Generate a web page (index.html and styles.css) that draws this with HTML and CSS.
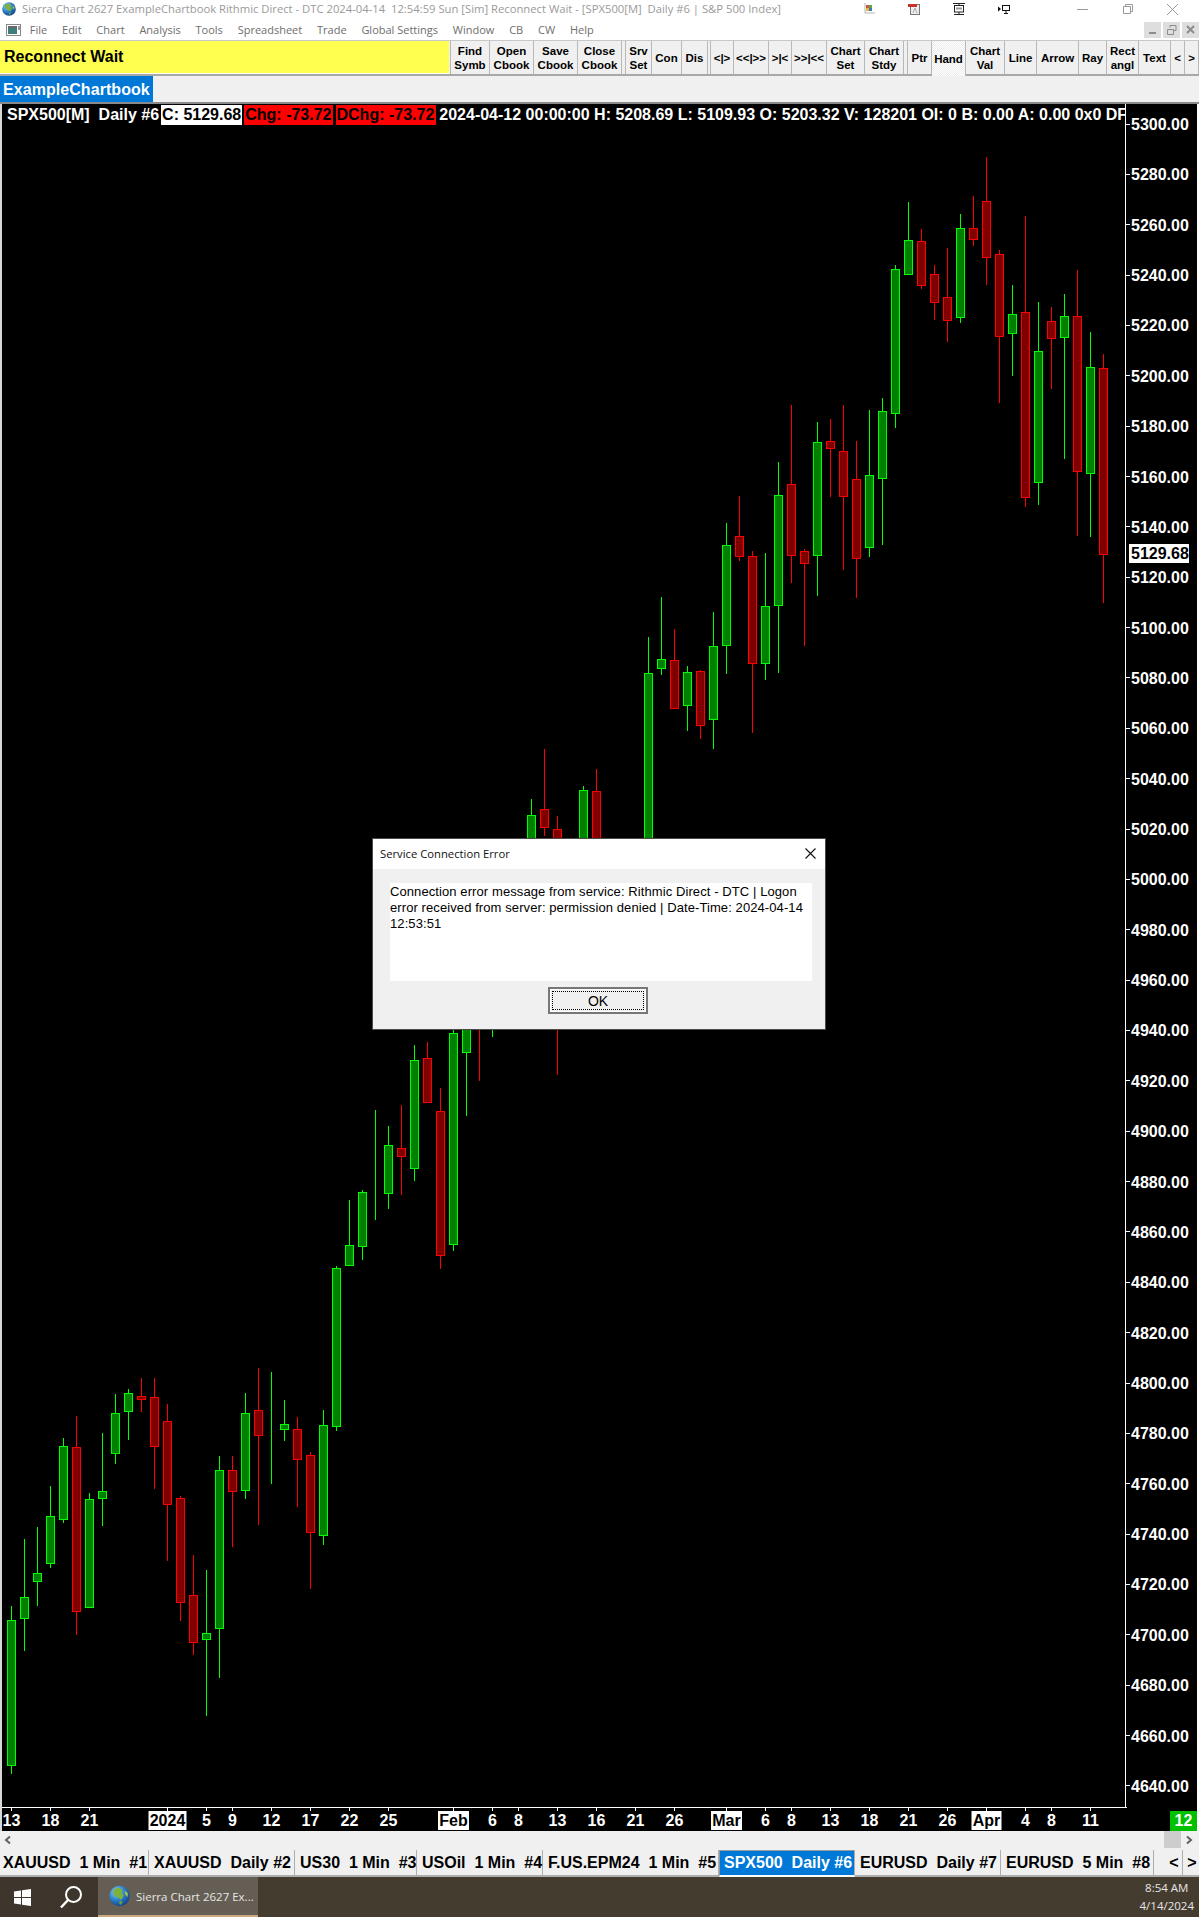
FILE: index.html
```html
<!DOCTYPE html>
<html lang="en">
<head>
    <meta charset="UTF-8">
    <title>Sierra Chart 2627 ExampleChartbook</title>
    <link rel="stylesheet" href="styles.css">
</head>
<body>

<svg class="defs" width="0" height="0">
    <defs>
        <radialGradient id="sea" cx="35%" cy="30%" r="75%">
            <stop offset="0" stop-color="#8fd0f5"/>
            <stop offset="0.55" stop-color="#2a7fc8"/>
            <stop offset="1" stop-color="#123f86"/>
        </radialGradient>
        <symbol id="globe" viewBox="0 0 14 14">
            <circle cx="7" cy="7" r="6.8" fill="url(#sea)"/>
            <path d="M3 2.6 6.4 1.4 9 2.8 8.4 5.2 9.8 6.8 8 9.6 6.4 8 4.6 7.6 3 5.6Z" fill="#7fb23a"/>
            <path d="M10.4 3.4 12.6 5.2 12.4 7.6 10.8 6.2Z" fill="#9cc24a"/>
            <path d="M7 10.4 9 10.6 8.2 12.8 6.8 12.4Z" fill="#6ba437"/>
        </symbol>
    </defs>
</svg>

<div class="titlebar">
    <svg class="app-icon" width="14" height="14"><use href="#globe"/></svg>
    <span class="title-text">Sierra Chart 2627 ExampleChartbook Rithmic Direct - DTC 2024-04-14  12:54:59 Sun [Sim] Reconnect Wait - [SPX500[M]  Daily #6 | S&amp;P 500 Index]</span>
    <div class="tray">
        <svg width="12" height="12" viewBox="0 0 12 12">
            <path d="M2 0v10h10" fill="none" stroke="#b5b5b5"/>
            <rect x="3" y="2" width="3" height="3" fill="#d9503f"/>
            <rect x="6" y="2" width="3" height="3" fill="#5aa845"/>
            <rect x="3" y="5" width="3" height="3" fill="#e8b92f"/>
            <rect x="6" y="5" width="3" height="3" fill="#3d78c9"/>
        </svg>
        <svg width="12" height="12" viewBox="0 0 12 12">
            <rect x="2.5" y="1.5" width="9" height="10" fill="#eee" stroke="#777"/>
            <rect x="0" y="1" width="9" height="3" fill="#c8322b"/>
            <path d="M5 10 7 5 9 10" fill="none" stroke="#aaa"/>
        </svg>
        <svg width="12" height="12" viewBox="0 0 12 12">
            <path d="M0 .5h12M1 11.5h10M6 0v2M6 9v3" stroke="#222"/>
            <rect x="1.5" y="2.5" width="9" height="6.5" fill="#fff" stroke="#222"/>
            <rect x="3" y="4.5" width="6" height="2" fill="#999"/>
        </svg>
        <svg width="12" height="12" viewBox="0 0 12 12">
            <path d="M0 3.5 3 6 0 8.500Z" fill="#111"/>
            <rect x="4.500" y="2.500" width="7" height="5" fill="#fff" stroke="#111"/>
            <path d="M8 8v2M6 10.500h4" stroke="#111"/>
        </svg>
    </div>
    <div class="window-controls">
        <svg width="45" height="19" viewBox="0 0 45 19"><path d="M17 9.500h11" stroke="#999"/></svg>
        <svg width="45" height="19" viewBox="0 0 45 19"><path d="M18.500 6.500h7v7h-7zM20.500 6.500v-2h7v7h-2" fill="none" stroke="#999"/></svg>
        <svg width="45" height="19" viewBox="0 0 45 19"><path d="M17 4l11 11M28 4 17 15" stroke="#999"/></svg>
    </div>
</div>

<div class="menubar">
    <svg class="doc-icon" width="15" height="12" viewBox="0 0 15 12">
        <rect x=".5" y=".5" width="14" height="11" fill="#fff" stroke="#8a8a8a"/>
        <rect x="2" y="2" width="9" height="8" fill="#3f7f7a"/>
        <rect x="2" y="2" width="9" height="2" fill="#6a6a6a"/>
        <rect x="12.500" y="2" width="1" height="4" fill="#333"/>
    </svg>
    <span>File</span>
    <span>Edit</span>
    <span>Chart</span>
    <span>Analysis</span>
    <span>Tools</span>
    <span>Spreadsheet</span>
    <span>Trade</span>
    <span>Global Settings</span>
    <span>Window</span>
    <span>CB</span>
    <span>CW</span>
    <span>Help</span>
    <div class="mdi-controls">
        <svg width="17" height="16" viewBox="0 0 17 16"><path d="M5 11h7" stroke="#8c8c8c" stroke-width="2"/></svg>
        <svg width="17" height="16" viewBox="0 0 17 16"><path d="M4.500 7.500h6v5h-6zM7 5.500V3.500h6v5h-2" fill="none" stroke="#8c8c8c"/></svg>
        <svg width="17" height="16" viewBox="0 0 17 16"><path d="M5 4l7 7M12 4l-7 7" stroke="#8c8c8c" stroke-width="2"/></svg>
    </div>
</div>

<div class="toolbar">
    <div class="status-box">Reconnect Wait</div>
    <div class="tb-group group-book">
        <button>Find<br>Symb</button>
        <button>Open<br>Cbook</button>
        <button>Save<br>Cbook</button>
        <button>Close<br>Cbook</button>
    </div>
    <div class="tb-group group-conn">
        <button>Srv<br>Set</button>
        <button>Con</button>
        <button>Dis</button>
    </div>
    <div class="tb-group group-zoom">
        <button>&lt;|&gt;</button>
        <button>&lt;&lt;|&gt;&gt;</button>
        <button>&gt;|&lt;</button>
        <button>&gt;&gt;|&lt;&lt;</button>
        <button>Chart<br>Set</button>
        <button>Chart<br>Stdy</button>
    </div>
    <div class="tb-group group-draw">
        <button>Ptr</button>
        <button class="pressed">Hand</button>
        <button>Chart<br>Val</button>
        <button>Line</button>
        <button>Arrow</button>
        <button>Ray</button>
        <button>Rect<br>angl</button>
        <button>Text</button>
    </div>
    <div class="tb-group group-nav">
        <button>&lt;</button>
        <button>&gt;</button>
    </div>
</div>

<div class="bookbar">
    <div class="book-tab">ExampleChartbook</div>
</div>

<div class="chart">
    <svg id="plot" class="plot" width="1199" height="1727" viewBox="0 104 1199 1727"></svg>
    <div class="info-line">
        <span>SPX500[M]  Daily #6</span>
        <span class="hl-white">C: 5129.68</span>
        <span class="hl-red">Chg: -73.72</span>
        <span class="hl-red">DChg: -73.72</span>
        <span class="info-rest">2024-04-12 00:00:00 H: 5208.69 L: 5109.93 O: 5203.32 V: 128201 OI: 0 B: 0.00 A: 0.00 0x0 DF</span>
    </div>
</div>

<div class="hscroll">
    <svg width="10" height="10" viewBox="0 0 10 10"><path d="M7 1.500 3 5l4 3.500" fill="none" stroke="#606060" stroke-width="2"/></svg>
    <div class="scroll-thumb"></div>
    <svg width="10" height="10" viewBox="0 0 10 10"><path d="M3 1.500 7 5 3 8.500" fill="none" stroke="#606060" stroke-width="2"/></svg>
</div>

<div class="tabs">
    <div class="tab">XAUUSD  1 Min  #1</div>
    <div class="tab">XAUUSD  Daily #2</div>
    <div class="tab">US30  1 Min  #3</div>
    <div class="tab">USOil  1 Min  #4</div>
    <div class="tab">F.US.EPM24  1 Min  #5</div>
    <div class="tab active">SPX500  Daily #6</div>
    <div class="tab">EURUSD  Daily #7</div>
    <div class="tab">EURUSD  5 Min  #8</div>
    <div class="tab-gap"></div>
    <div class="tab nav-tab">&lt;</div>
    <div class="tab nav-tab">&gt;</div>
</div>

<div class="taskbar">
    <div class="task-left">
        <svg width="17" height="17" viewBox="0 0 17 17">
            <path d="M0 2.400 7 1.400V8H0ZM8 1.300 17 0V8H8ZM0 9H7V15.600L0 14.600ZM8 9H17V17L8 15.700Z" fill="#fff"/>
        </svg>
        <svg width="24" height="24" viewBox="0 0 24 24">
            <circle cx="14.500" cy="9.500" r="7.500" fill="none" stroke="#fff" stroke-width="2"/>
            <path d="M9 15 2 22.500" stroke="#fff" stroke-width="2.500"/>
        </svg>
    </div>
    <div class="task-item">
        <svg width="21" height="24"><use href="#globe"/></svg>
        <span>Sierra Chart 2627 Ex...</span>
    </div>
    <div class="clock">
        <span>8:54 AM</span>
        <span>4/14/2024</span>
    </div>
</div>

<div class="dialog">
    <div class="dialog-title">
        <span>Service Connection Error</span>
        <svg width="11" height="11" viewBox="0 0 11 11"><path d="M.5.500l10 10M10.500.500l-10 10" stroke="#111" stroke-width="1.100"/></svg>
    </div>
    <div class="dialog-body">
        <div class="dialog-msg">Connection error message from service: Rithmic Direct - DTC | Logon error received from server: permission denied | Date-Time: 2024-04-14 12:53:51</div>
        <button class="ok-btn">OK</button>
    </div>
</div>

<script src="chart.js"></script>
</body>
</html>
```

FILE: styles.css
```css
* {
    box-sizing: border-box;
}
body {
    position: relative;
    width: 1199px;
    height: 1917px;
    margin: 0;
    overflow: hidden;
    background: #f0f0f0;
    font-family: "Liberation Sans", Arial, sans-serif;
}
.defs {
    position: absolute;
}

/* window chrome */
.titlebar {
    display: flex;
    align-items: center;
    height: 19px;
    padding-bottom: 1px;
    background: #fff;
}
.app-icon {
    flex: none;
    margin: 0 6px 0 2px;
}
.title-text {
    flex: 0 0 841px;
    margin-bottom: 1px;
    overflow: hidden;
    font-family: "Open Sans", sans-serif;
    font-size: 11.25px;
    color: #9a9a9a;
    white-space: pre;
}
.tray {
    display: flex;
    gap: 33px;
}
.window-controls {
    display: flex;
    margin-left: 50px;
}
.menubar {
    display: flex;
    align-items: center;
    gap: 14.8px;
    height: 21px;
    padding-left: 6px;
    background: #fff;
    font-family: "Open Sans", sans-serif;
    font-size: 11px;
    color: #6e6e6e;
}
.doc-icon {
    margin-right: -6px;
}
.mdi-controls {
    display: flex;
    gap: 2px;
    margin-left: auto;
}
.mdi-controls svg {
    background: #dedede;
}

/* toolbar */
.toolbar {
    display: flex;
    height: 36px;
    border-top: 1px solid #c8c8c8;
    border-bottom: 2px solid #a8a8a8;
}
.status-box {
    flex: 0 0 449px;
    margin-right: 1px;
    padding: 6px 0 0 4px;
    background: #ffff4f;
    border-bottom: 1px solid #fff;
    font-size: 16px;
    font-weight: bold;
    line-height: 20px;
    color: #000;
}
.tb-group {
    display: grid;
    border-left: 1px solid #b8b8b8;
}
.tb-group button {
    padding: 0;
    background: #f0f0f0;
    border: 0;
    border-right: 1px solid #b8b8b8;
    font-family: inherit;
    font-size: 11.5px;
    font-weight: bold;
    line-height: 14px;
    color: #000;
}
.tb-group button.pressed {
    background: repeating-conic-gradient(#fff 0 25%, #ececec 0 50%) 0 0 / 2px 2px;
    margin-bottom: -2px;
}
.group-book {
    grid-template-columns: 39px 44px 44px 44px;
    margin-right: 3px;
}
.group-conn {
    grid-template-columns: 26px 30px 26px;
    margin-right: 2px;
}
.group-zoom {
    grid-template-columns: 23px 35px 23px 35px 38px 39px;
    margin-right: 3px;
}
.group-draw {
    grid-template-columns: 24px 34px 39px 32px 42px 28px 32px 32px;
}
.group-nav {
    grid-template-columns: 14px 14px;
    border-left: 0;
}
.bookbar {
    height: 28px;
    border-bottom: 2px solid #8a8a8a;
}
.book-tab {
    width: 153px;
    height: 26px;
    background: #0078d7;
    padding-left: 3px;
    font-size: 16px;
    font-weight: bold;
    letter-spacing: 0.06px;
    line-height: 28px;
    color: #fff;
}

/* chart */
.chart {
    position: relative;
    height: 1727px;
    background: #000;
}
.plot {
    position: absolute;
    left: 0;
    top: 0;
}
.candle-wick {
    stroke-width: 1;
    shape-rendering: crispEdges;
}
.up .candle-wick {
    stroke: #00ff00;
}
.down .candle-wick {
    stroke: #ff0000;
}
.candle-body {
    stroke-width: 1;
    shape-rendering: crispEdges;
}
.up .candle-body {
    fill: #008000;
    stroke: #00ff00;
}
.down .candle-body {
    fill: #800000;
    stroke: #ff0000;
}
.axis-text {
    font-family: "Liberation Sans", Arial, sans-serif;
    font-size: 16px;
    font-weight: bold;
    fill: #fff;
}
.axis-text.on-white {
    fill: #000;
}
.info-line {
    position: relative;
    display: flex;
    gap: 2px;
    width: 1123px;
    height: 21px;
    margin-left: 2px;
    padding: 1px 0 0 5px;
    overflow: hidden;
    font-size: 16px;
    font-weight: bold;
    line-height: 19px;
    color: #fff;
    white-space: pre;
}
.info-line span {
    flex: none;
}
.hl-white {
    padding: 0 1px;
    background: #fff;
    color: #000;
}
.hl-red {
    padding: 0 1px;
    background: #ff0000;
    color: #000;
}
.hl-red + .hl-red {
    margin-left: 1px;
    padding-right: 2px;
}
.info-rest {
    margin-left: 1px;
}

/* bottom rows */
.hscroll {
    display: flex;
    align-items: center;
    height: 19px;
    padding: 0 5px 2px 3px;
}
.scroll-thumb {
    width: 17px;
    height: 17px;
    margin-left: auto;
    margin-right: 3px;
    background: #cdcdcd;
}
.tabs {
    display: grid;
    grid-template-columns: 149px 146px 122px 126px 176px 136px 146px 153px 12px 17px 16px;
    height: 27px;
}
.tab {
    padding-left: 5px;
    border-right: 1px solid #aeaeae;
    border-bottom: 2px solid #aeaeae;
    font-size: 16px;
    font-weight: bold;
    line-height: 25px;
    color: #000;
    white-space: pre;
}
.tab:first-child {
    padding-left: 3px;
}
.tab.nav-tab {
    padding-left: 0;
    text-align: center;
}
.tab.nav-tab:last-child {
    padding-left: 2px;
    border-right: 0;
}
.tab.active {
    padding-left: 4px;
    background: #0078d7;
    border-top: 1px solid #9a9a9a;
    border-left: 1px solid #9a9a9a;
    border-bottom: 2px solid #fff;
    line-height: 24px;
    color: #fff;
}
.tab-gap {
    border-bottom: 2px solid #aeaeae;
}
.taskbar {
    display: flex;
    height: 40px;
    background: #453c30;
    font-family: "Open Sans", sans-serif;
    font-size: 11.5px;
    color: #e6e6e6;
}
.task-left {
    display: flex;
    flex: 0 0 98px;
    align-items: center;
    gap: 28px;
    padding-left: 14px;
    background: #3e362c;
}
.task-item {
    display: flex;
    flex: 0 0 160px;
    align-items: center;
    gap: 6px;
    padding-left: 11px;
    background: #655e54;
    border-bottom: 2px solid #c9a87e;
}
.clock {
    display: flex;
    flex-direction: column;
    align-items: center;
    justify-content: center;
    gap: 2px;
    margin-left: auto;
    padding: 0 5px 1px 0;
    line-height: 16px;
}

/* modal dialog */
.dialog {
    position: absolute;
    left: 372px;
    top: 838px;
    width: 454px;
    height: 192px;
    background: #f0f0f0;
    border: 1px solid #4a4a4a;
}
.dialog-title {
    display: flex;
    align-items: center;
    justify-content: space-between;
    height: 30px;
    padding: 0 9px 2px 7px;
    background: #fff;
    font-family: "Open Sans", sans-serif;
    font-size: 11.25px;
    color: #111;
}
.dialog-body {
    padding: 14px 13px 0 17px;
}
.dialog-msg {
    width: 422px;
    height: 98px;
    padding-top: 1px;
    background: #fff;
    font-size: 13px;
    letter-spacing: 0.09px;
    line-height: 16px;
    color: #000;
}
.ok-btn {
    display: block;
    width: 100px;
    height: 27px;
    margin: 6px 0 0 158px;
    background: #f0f0f0;
    border: 2px solid #777;
    box-shadow: inset 0 0 0 1px #fff;
    outline: 1px dotted #000;
    outline-offset: -5px;
    font-family: inherit;
    font-size: 14px;
    color: #000;
}
```

FILE: chart.js
```js
// [up?, wick top, body top, body bottom, wick bottom], page y coordinates, one bar per 13px
const bars = [
    [1, 1606, 1620.3, 1764.7, 1774], [1, 1539, 1597.3, 1617.7, 1651], [1, 1527, 1573.3, 1581.3, 1606],
    [1, 1486, 1516.3, 1562.7, 1568], [1, 1438, 1446.3, 1518.7, 1523], [0, 1416, 1447.3, 1610.7, 1635],
    [1, 1493, 1499.3, 1606.7, 1606.7], [1, 1433, 1491.3, 1497.7, 1526], [1, 1394, 1413.3, 1452.7, 1464],
    [1, 1389, 1393.3, 1410.7, 1440], [0, 1377.7, 1396.3, 1398.7, 1412], [0, 1377.7, 1397.3, 1445.7, 1489],
    [0, 1404, 1421.3, 1503.7, 1561], [0, 1496, 1498.3, 1601.7, 1621], [0, 1555, 1595.3, 1641.7, 1655],
    [1, 1570, 1633.3, 1638.7, 1716], [1, 1456, 1470.3, 1627.7, 1678], [0, 1456, 1470.3, 1490.7, 1547],
    [1, 1393, 1413.3, 1489.7, 1499], [0, 1368, 1410.3, 1434.7, 1525], [1, 1372, 1435.3, 1435.3, 1484],
    [1, 1400, 1424.3, 1428.7, 1441], [0, 1417, 1429.3, 1458.7, 1507], [0, 1452, 1455.3, 1531.7, 1589],
    [1, 1410, 1425.3, 1534.7, 1545], [1, 1266, 1268.3, 1425.7, 1431], [1, 1200, 1245.3, 1264.7, 1264.7],
    [1, 1190, 1192.3, 1245.7, 1260], [1, 1110, 1191, 1191, 1220], [1, 1126, 1145.3, 1192.7, 1209],
    [0, 1105, 1148.3, 1155.7, 1195], [1, 1045, 1060.3, 1167.7, 1181], [0, 1042, 1058.3, 1101.7, 1101.7],
    [0, 1088, 1111.3, 1254.7, 1269], [1, 1000, 1033.3, 1243.7, 1251], [1, 950, 980, 1051.7, 1116],
    [0, 900, 920, 980, 1081], [1, 880, 900, 960, 1037], [1, 880, 900, 960, 1000], [1, 880, 900, 960, 1000],
    [1, 799, 815.3, 900, 950], [0, 749, 809.3, 826.7, 835.7], [0, 816, 829.3, 900, 1075], [0, 880, 900, 960, 1000],
    [1, 786, 790.3, 900, 950], [0, 769, 791.3, 900, 950], [1, 838, 860, 900, 950], [1, 880, 900, 960, 1000],
    [1, 880, 900, 960, 1000], [1, 637, 673.3, 900, 1000], [1, 597, 659.3, 667.7, 675], [0, 629, 660.3, 707.7, 709],
    [1, 666, 672.3, 704.7, 731], [0, 670, 671.3, 724.7, 739], [1, 612, 646.3, 718.7, 749], [1, 523, 545.3, 644.7, 674],
    [0, 496, 536.3, 555.7, 561], [0, 551.3, 556.3, 662.7, 733], [1, 553, 606.3, 662.7, 680], [1, 462, 495.3, 604.7, 673],
    [0, 405, 484.3, 554.7, 583], [0, 549, 551.3, 562.7, 646], [1, 422, 442.3, 554.7, 596], [0, 419, 441.3, 447.7, 497],
    [0, 405, 451.3, 495.7, 570], [0, 441, 479.3, 557.7, 598], [1, 410, 475.3, 546.7, 557], [1, 398, 411.3, 477.7, 545],
    [1, 265, 269.3, 412.7, 428], [1, 202, 240.3, 273.7, 275], [0, 229, 241.3, 284.7, 289], [0, 265, 274.3, 301.7, 320],
    [0, 248, 297.3, 319.7, 342], [1, 214, 228.3, 316.7, 323], [0, 196, 228.3, 238.7, 246], [0, 157, 201.3, 256.7, 285],
    [0, 250, 254.3, 335.7, 403.3], [1, 285, 314.3, 332.7, 376], [0, 216, 312.3, 496.7, 507], [1, 302, 351.3, 481.7, 505],
    [0, 307, 321.3, 337.7, 389], [1, 294, 316.3, 336.7, 459], [0, 270, 316.3, 470.7, 536], [1, 332, 367.3, 472.7, 537],
    [0, 354, 368.3, 553.7, 603]
];

// [text, bar index, width of the white box or 0]
const dates = [
    ['13', 0, 0], ['18', 3, 0], ['21', 6, 0], ['2024', 12, 38], ['5', 15, 0], ['9', 17, 0], ['12', 20, 0],
    ['17', 23, 0], ['22', 26, 0], ['25', 29, 0], ['Feb', 34, 31], ['6', 37, 0], ['8', 39, 0], ['13', 42, 0],
    ['16', 45, 0], ['21', 48, 0], ['26', 51, 0], ['Mar', 55, 31], ['6', 58, 0], ['8', 60, 0], ['13', 63, 0],
    ['18', 66, 0], ['21', 69, 0], ['26', 72, 0], ['Apr', 75, 30], ['4', 78, 0], ['8', 80, 0], ['11', 83, 0]
];

const half = v => Math.round(v) + 0.5;
const barX = i => Math.floor(11.33 + 13 * i) + 0.5;
let out = '';

// frame
out += '<rect x="0" y="104" width="2" height="1727" fill="#d8d8d8"/>';
out += '<rect x="1125" y="104" width="1" height="1704" fill="#fff"/>';
out += '<rect x="2" y="1807" width="1125" height="1" fill="#fff"/>';
out += '<rect x="1197" y="104" width="2" height="1727" fill="#fff"/>';

bars.forEach(function(b, i) {
    const x = barX(i);
    const top = half(b[2]);
    const bottom = half(b[3]);
    out += `<g class="${b[0] ? 'up' : 'down'}">`;
    out += `<line class="candle-wick" x1="${x}" x2="${x}" y1="${Math.round(b[1])}" y2="${Math.round(b[4])}"/>`;
    out += `<rect class="candle-body" x="${x - 4}" y="${top}" width="8" height="${bottom - top}"/>`;
    out += '</g>';
});

// price axis
for (let k = 0; k <= 33; k++) {
    const price = 5300 - 20 * k;
    const y = 123.5 + 50.36 * k;
    out += `<rect x="1126" y="${Math.round(y)}" width="4" height="1" fill="#fff"/>`;
    out += `<text class="axis-text" x="1131" y="${Math.round(y + 6.5)}">${price}.00</text>`;
}
out += '<rect x="1129" y="544" width="60" height="19" fill="#fff"/>';
out += '<text class="axis-text on-white" x="1131" y="559">5129.68</text>';

// date axis
dates.forEach(function(d) {
    const x = barX(d[1]);
    out += `<rect x="${x - 0.5}" y="1808" width="1" height="3" fill="#fff"/>`;
    if (d[2]) {
        out += `<rect x="${x - d[2] / 2}" y="1811" width="${d[2]}" height="19" fill="#fff"/>`;
    }
    out += `<text class="axis-text${d[2] ? ' on-white' : ''}" x="${x}" y="1826" text-anchor="middle">${d[0]}</text>`;
});
out += '<rect x="1170" y="1811" width="27" height="20" fill="#00c000"/>';
out += '<text class="axis-text" x="1183.500" y="1826" text-anchor="middle">12</text>';

document.getElementById('plot').innerHTML = out;
```
